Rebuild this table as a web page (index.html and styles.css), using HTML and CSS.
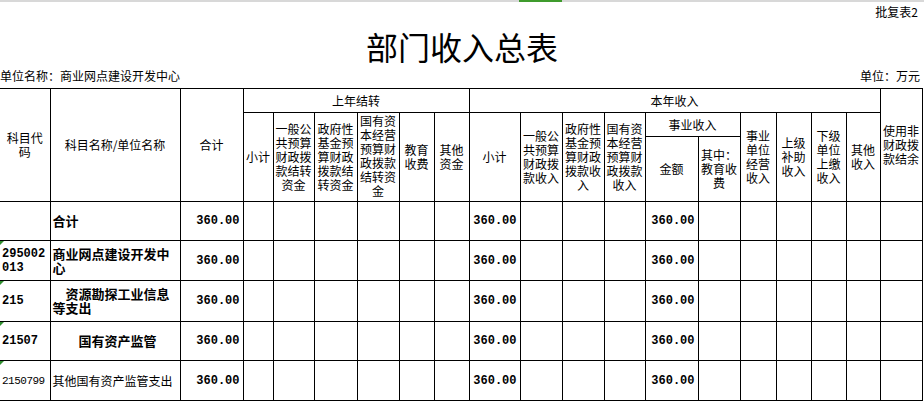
FILE: index.html
```html
<!DOCTYPE html>
<html lang="zh-CN">
<head>
<meta charset="utf-8">
<title>部门收入总表</title>
<link rel="stylesheet" href="styles.css">
</head>
<body>
<div class="topbar"><div class="topbar-active"></div></div>
<div class="sheet-no">批复表2</div>
<h1 class="title">部门收入总表</h1>
<div class="info">
  <span>单位名称：商业网点建设开发中心</span>
  <span>单位：万元</span>
</div>
<table class="grid">
  <colgroup>
    <col class="w50"><col class="w130"><col class="w63"><col class="w30"><col class="w41"><col class="w43"><col class="w42"><col class="w35"><col class="w35"><col class="w51"><col class="w42"><col class="w42"><col class="w41"><col class="w53"><col class="w42"><col class="w36"><col class="w35"><col class="w35"><col class="w34"><col class="w42">
  </colgroup>
  <thead>
    <tr class="ha">
      <th rowspan="3" class="first pad">科目代码</th>
      <th rowspan="3">科目名称/单位名称</th>
      <th rowspan="3">合计</th>
      <th colspan="6">上年结转</th>
      <th colspan="10">本年收入</th>
      <th rowspan="3">使用非财政拨款结余</th>
    </tr>
    <tr class="hb">
      <th rowspan="2">小计</th>
      <th rowspan="2">一般公共预算财政拨款结转资金</th>
      <th rowspan="2">政府性基金预算财政拨款结转资金</th>
      <th rowspan="2" class="tall">国有资本经营预算财政拨款结转资金</th>
      <th rowspan="2">教育收费</th>
      <th rowspan="2">其他资金</th>
      <th rowspan="2">小计</th>
      <th rowspan="2">一般公共预算财政拨款收入</th>
      <th rowspan="2">政府性基金预算财政拨款收入</th>
      <th rowspan="2">国有资本经营预算财政拨款收入</th>
      <th colspan="2">事业收入</th>
      <th rowspan="2">事业单位经营收入</th>
      <th rowspan="2">上级补助收入</th>
      <th rowspan="2">下级单位上缴收入</th>
      <th rowspan="2">其他收入</th>
    </tr>
    <tr class="hc">
      <th>金额</th>
      <th>其中：教育收费</th>
    </tr>
  </thead>
  <tbody>
    <tr class="r39">
      <td class="first code b"></td>
      <td class="name b">合计</td>
      <td class="num">360.00</td>
      <td></td><td></td><td></td><td></td><td></td><td></td>
      <td class="num">360.00</td>
      <td></td><td></td><td></td>
      <td class="num">360.00</td>
      <td></td><td></td><td></td><td></td><td></td><td></td>
    </tr>
    <tr class="r40">
      <td class="first code b flag">295002013</td>
      <td class="name b">商业网点建设开发中心</td>
      <td class="num">360.00</td>
      <td></td><td></td><td></td><td></td><td></td><td></td>
      <td class="num">360.00</td>
      <td></td><td></td><td></td>
      <td class="num">360.00</td>
      <td></td><td></td><td></td><td></td><td></td><td></td>
    </tr>
    <tr class="r41">
      <td class="first code b flag">215</td>
      <td class="name b">　资源勘探工业信息等支出</td>
      <td class="num">360.00</td>
      <td></td><td></td><td></td><td></td><td></td><td></td>
      <td class="num">360.00</td>
      <td></td><td></td><td></td>
      <td class="num">360.00</td>
      <td></td><td></td><td></td><td></td><td></td><td></td>
    </tr>
    <tr class="r39">
      <td class="first code b flag">21507</td>
      <td class="name b">　　国有资产监管</td>
      <td class="num">360.00</td>
      <td></td><td></td><td></td><td></td><td></td><td></td>
      <td class="num">360.00</td>
      <td></td><td></td><td></td>
      <td class="num">360.00</td>
      <td></td><td></td><td></td><td></td><td></td><td></td>
    </tr>
    <tr class="r40">
      <td class="first code small flag">2150799</td>
      <td class="name">其他国有资产监管支出</td>
      <td class="num">360.00</td>
      <td></td><td></td><td></td><td></td><td></td><td></td>
      <td class="num">360.00</td>
      <td></td><td></td><td></td>
      <td class="num">360.00</td>
      <td></td><td></td><td></td><td></td><td></td><td></td>
    </tr>
  </tbody>
</table>
</body>
</html>
```
FILE: styles.css
```css
html, body {
  margin: 0;
  padding: 0;
  background: #fff;
  color: #000;
}
body {
  width: 924px;
  font-family: "Noto Sans CJK SC", "Liberation Sans", sans-serif;
  font-size: 12px;
  overflow: hidden;
}
.topbar {
  height: 2px;
  background: #d8d8d8;
  display: flex;
}
.topbar-active {
  margin-left: 519px;
  width: 43px;
  background: #3f9b2d;
}
.sheet-no {
  height: 24px;
  line-height: 20px;
  text-align: right;
  padding-right: 6px;
  font-size: 12px;
}
.title {
  margin: 0;
  height: 40px;
  line-height: 40px;
  text-align: center;
  font-size: 32px;
  font-weight: 400;
  font-family: "Noto Sans CJK SC", serif;
}
.info {
  height: 22px;
  line-height: 20px;
  display: flex;
  justify-content: space-between;
  padding-right: 4px;
  font-size: 12px;
}
.grid {
  border-collapse: collapse;
  table-layout: fixed;
  width: 922px;
}
.grid th, .grid td {
  border: 1px solid #000;
  padding: 0 1px;
  vertical-align: middle;
  overflow: hidden;
}
.grid th {
  font-weight: 400;
  font-size: 12px;
  line-height: 14px;
  text-align: center;
}
.grid th.tall {
  vertical-align: top;
  padding-top: 1px;
}
.grid .first {
  border-left: none;
}
.grid th.pad {
  padding: 0 3px;
}
.w50 { width: 50px; }
.w130 { width: 130px; }
.w63 { width: 63px; }
.w30 { width: 30px; }
.w41 { width: 41px; }
.w43 { width: 43px; }
.w42 { width: 42px; }
.w35 { width: 35px; }
.w36 { width: 36px; }
.w34 { width: 34px; }
.w51 { width: 51px; }
.w53 { width: 53px; }
.ha { height: 24px; }
.hb { height: 24px; }
.hc { height: 65px; }
.r39 { height: 39px; }
.r40 { height: 40px; }
.r41 { height: 41px; }
.grid td.code {
  position: relative;
  font-family: "Liberation Mono", monospace;
  font-size: 12px;
  line-height: 14px;
  padding-left: 2px;
  word-break: break-all;
}
.grid td.code.small {
  font-size: 11px;
  letter-spacing: -0.5px;
}
.grid td.b {
  font-weight: 700;
}
.grid td.name {
  font-size: 12px;
  line-height: 14px;
  padding-left: 2px;
  text-align: left;
}
.grid td.name.b {
  font-size: 13px;
  font-weight: 700;
}
.grid td.num {
  font-family: "Liberation Mono", monospace;
  font-weight: 700;
  font-size: 12px;
  text-align: right;
  padding-right: 3px;
}
.flag::before {
  content: "";
  position: absolute;
  left: 0;
  top: 0;
  width: 0;
  height: 0;
  border-top: 4px solid #2f8f2f;
  border-right: 4px solid transparent;
}
```
